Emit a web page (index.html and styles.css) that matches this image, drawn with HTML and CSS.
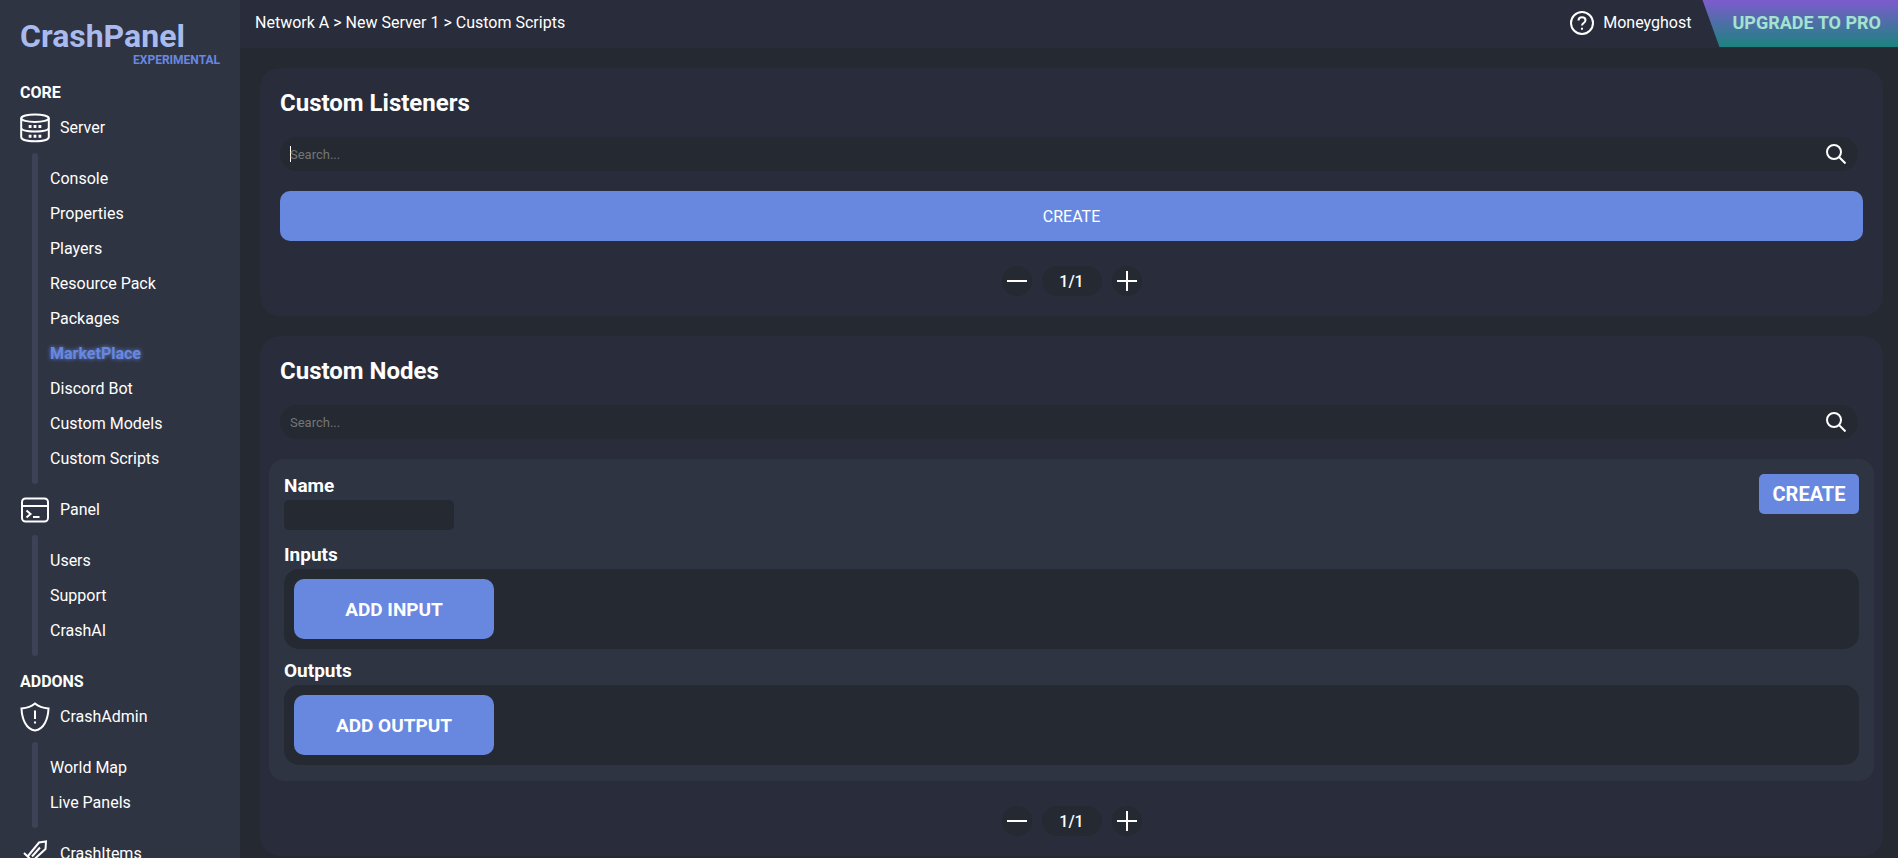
FILE: index.html
```html
<!DOCTYPE html>
<html lang="en">
<head>
    <meta charset="UTF-8">
    <meta name="viewport" content="width=device-width, initial-scale=1.0">
    <title>CrashPanel</title>
    <link rel="stylesheet" href="styles.css">
</head>
<body>

    <nav class="sidebar">
        <div class="logo">
            <div class="logo-name">CrashPanel</div>
            <div class="logo-tag">EXPERIMENTAL</div>
        </div>

        <div class="category">CORE</div>
        <div class="group">
            <svg class="icon" viewBox="0 0 30 30">
                <ellipse cx="15" cy="5.2" rx="13.800" ry="3.800"/>
                <path d="M1.200 5.200v18.800c0 2.700 6 4.300 13.800 4.300s13.800-1.600 13.800-4.300V5.200M1.200 14.800c0 2.400 6 3.700 13.800 3.700s13.800-1.300 13.800-3.700"/>
                <path class="dots" d="M8.700 13.500h2.800M13.600 13.500h2.800M18.500 13.500h2.800M8.700 23.300h2.800M13.600 23.300h2.800M18.500 23.300h2.800"/>
            </svg>
            <span>Server</span>
        </div>
        <div class="links">
            <a href="#">Console</a>
            <a href="#">Properties</a>
            <a href="#">Players</a>
            <a href="#">Resource Pack</a>
            <a href="#">Packages</a>
            <a href="#" class="highlight">MarketPlace</a>
            <a href="#">Discord Bot</a>
            <a href="#">Custom Models</a>
            <a href="#">Custom Scripts</a>
        </div>
        <div class="group">
            <svg class="icon" viewBox="0 0 30 30">
                <rect x="2" y="3.500" width="26" height="23" rx="3.500"/>
                <path d="M2 11h26M6.500 15.500l4 3.500-4 3.500M13 22h6.500"/>
            </svg>
            <span>Panel</span>
        </div>
        <div class="links">
            <a href="#">Users</a>
            <a href="#">Support</a>
            <a href="#">CrashAI</a>
        </div>

        <div class="category">ADDONS</div>
        <div class="group">
            <svg class="icon" viewBox="0 0 30 30">
                <path d="M15 1.500c-3.500 3-8.500 4.500-13.500 5 .5 10.500 4.500 21 13.500 22 9-1 13-11.500 13.500-22-5-.5-10-2-13.500-5z"/>
                <path d="M15 8.500v8.500M15 19.500v2"/>
            </svg>
            <span>CrashAdmin</span>
        </div>
        <div class="links">
            <a href="#">World Map</a>
            <a href="#">Live Panels</a>
        </div>
        <div class="group">
            <svg class="icon" viewBox="0 0 30 30">
                <path d="M8 17L19 3.500l7-1-.5 7.500L13 21.500M12 17.500l8-9M4 14l11.500 11M8.500 20L3 25.500"/>
            </svg>
            <span>CrashItems</span>
        </div>
    </nav>

    <div class="page">
        <header class="topbar">
            <div class="breadcrumb">Network A &gt; New Server 1 &gt; Custom Scripts</div>
            <div class="account">
                <svg class="help-icon" viewBox="0 0 24 24">
                    <circle cx="12" cy="12" r="11"/>
                    <path d="M8.500 9.500c0-2 1.500-3.300 3.500-3.300s3.500 1.300 3.500 3.100c0 2.700-3.500 2.700-3.500 5.200M12 16.800v2"/>
                </svg>
                <span>Moneyghost</span>
            </div>
            <button class="upgrade">UPGRADE TO PRO</button>
        </header>

        <main class="content">
            <section class="card">
                <h2>Custom Listeners</h2>
                <div class="search">
                    <span class="caret"></span>
                    <input type="text" placeholder="Search..." aria-label="Search listeners">
                    <svg class="search-icon" viewBox="0 0 20 20">
                        <circle cx="8" cy="8" r="7"/>
                        <path d="M13 13l6.500 6.500"/>
                    </svg>
                </div>
                <button class="create-wide">CREATE</button>
                <div class="pager">
                    <button aria-label="Previous page"><svg viewBox="0 0 20 20"><path d="M0 10h20"/></svg></button>
                    <span>1/1</span>
                    <button aria-label="Next page"><svg viewBox="0 0 20 20"><path d="M0 10h20M10 0v20"/></svg></button>
                </div>
            </section>

            <section class="card">
                <h2>Custom Nodes</h2>
                <div class="search">
                    <input type="text" placeholder="Search..." aria-label="Search nodes">
                    <svg class="search-icon" viewBox="0 0 20 20">
                        <circle cx="8" cy="8" r="7"/>
                        <path d="M13 13l6.500 6.500"/>
                    </svg>
                </div>
                <div class="node">
                    <div class="node-top">
                        <div class="name-field">
                            <label for="nodeName">Name</label>
                            <input type="text" id="nodeName">
                        </div>
                        <button class="create">CREATE</button>
                    </div>
                    <h3>Inputs</h3>
                    <div class="slot">
                        <button>ADD INPUT</button>
                    </div>
                    <h3>Outputs</h3>
                    <div class="slot">
                        <button>ADD OUTPUT</button>
                    </div>
                </div>
                <div class="pager">
                    <button aria-label="Previous page"><svg viewBox="0 0 20 20"><path d="M0 10h20"/></svg></button>
                    <span>1/1</span>
                    <button aria-label="Next page"><svg viewBox="0 0 20 20"><path d="M0 10h20M10 0v20"/></svg></button>
                </div>
            </section>
        </main>
    </div>

</body>
</html>
```
FILE: styles.css
```css
* {
    box-sizing: border-box;
}

body {
    font-family: Roboto, sans-serif;
    font-size: 16px;
    margin: 0;
    display: flex;
    height: 100vh;
    overflow: hidden;
    background: #252932;
    color: white;
}

h2, h3 {
    margin: 0;
}

button, input {
    font-family: inherit;
    color: white;
    border: none;
    outline: none;
}

button {
    padding: 0;
    background: #6888e0;
    cursor: pointer;
}

svg {
    fill: none;
    stroke: white;
    stroke-width: 2;
}

/* sidebar */
.sidebar {
    width: 240px;
    flex-shrink: 0;
    padding: 19px 20px 0;
    overflow: hidden;
    background: #2f3442;
}

.logo {
    height: 63px;
    font-weight: bold;
}

.logo-name {
    font-size: 32px;
    line-height: 35px;
    color: #a9bbee;
}

.logo-tag {
    font-size: 12px;
    line-height: 12px;
    text-align: right;
    color: #6888e0;
}

.category {
    height: 20px;
    font-weight: bold;
    line-height: 22px;
}

.group {
    display: flex;
    align-items: center;
    gap: 10px;
    height: 51px;
}

.icon {
    width: 30px;
    height: 30px;
}

.dots {
    stroke-width: 3;
}

.links {
    display: grid;
    grid-template-columns: 6px 1fr;
    column-gap: 12px;
    margin-left: 12px;
    padding: 8px 0;
}

/* vertical bar beside the links */
.links::before {
    content: "";
    grid-row: 1 / span 9;
    margin: -8px 0;
    border-radius: 3px;
    background: #3e4257;
}

.links a {
    grid-column: 2;
    line-height: 35px;
    color: white;
    text-decoration: none;
}

.links .highlight {
    font-weight: bold;
    color: #6888e0;
    text-shadow: 0 0 4px #6888e0;
}

.links + .category {
    margin-top: 15px;
}

/* top bar */
.page {
    flex: 1;
    min-width: 0;
}

.topbar {
    display: flex;
    align-items: center;
    height: 48px;
    padding-left: 15px;
    background: #292c3a;
}

.account {
    display: flex;
    align-items: center;
    gap: 9px;
    margin-left: auto;
    margin-right: 11px;
}

.breadcrumb, .account {
    padding-bottom: 3px;
}

.help-icon {
    width: 24px;
    height: 24px;
}

.upgrade {
    align-self: flex-start;
    height: 47px;
    padding: 0 17px 3px 30px;
    font-size: 18px;
    font-weight: bold;
    color: #a3e3d0;
    background: linear-gradient(#7d5bcd, #1c837f);
    clip-path: polygon(0 0, 100% 0, 100% 100%, 17px 100%);
}

/* cards */
.content {
    display: flex;
    flex-direction: column;
    gap: 20px;
    padding: 20px 15px 2px 20px;
}

.card {
    padding: 20px;
    border-radius: 20px;
    background: #292c3a;
}

.card h2 {
    height: 29px;
    font-size: 24px;
    line-height: 31px;
}

.search {
    display: flex;
    align-items: center;
    height: 34px;
    margin: 20px 5px 20px 0;
    padding: 0 12px 0 10px;
    border-radius: 17px;
    background: #252932;
}

.search input {
    flex: 1;
    padding: 0;
    font-size: 13px;
    background: none;
}

.search input::placeholder {
    color: #757575;
}

.caret {
    width: 1px;
    height: 16px;
    margin-right: -1px;
    background: white;
}

.search-icon {
    width: 20px;
    height: 20px;
}

.create-wide {
    width: 100%;
    height: 50px;
    font-size: 16px;
    border-radius: 10px;
}

.pager {
    display: flex;
    justify-content: center;
    gap: 10px;
    margin-top: 25px;
}

.pager button {
    display: flex;
    align-items: center;
    justify-content: center;
    width: 30px;
    height: 30px;
    border-radius: 50%;
    background: #252932;
}

.pager svg {
    width: 20px;
    height: 20px;
}

.pager span {
    width: 60px;
    height: 30px;
    font-weight: 500;
    line-height: 31px;
    text-align: center;
    border-radius: 15px;
    background: #252932;
}

/* node editor */
.node {
    margin: 0 -11px;
    padding: 15px 15px 16px;
    border-radius: 15px;
    background: #2f3442;
}

.node-top {
    display: flex;
    justify-content: space-between;
    align-items: flex-start;
    margin-bottom: 13px;
}

.name-field {
    display: flex;
    flex-direction: column;
}

.name-field label, .node h3 {
    height: 26px;
    font-size: 19px;
    font-weight: bold;
    line-height: 24px;
}

.name-field input {
    width: 170px;
    height: 30px;
    padding: 0 5px;
    border-radius: 5px;
    background: #252932;
}

.create {
    width: 100px;
    height: 40px;
    font-size: 20px;
    font-weight: bold;
    border-radius: 5px;
}

.slot {
    padding: 10px;
    border-radius: 15px;
    background: #252932;
}

.slot + h3 {
    margin-top: 10px;
}

.slot button {
    display: block;
    width: 200px;
    height: 60px;
    font-size: 19px;
    font-weight: bold;
    border-radius: 10px;
}
```
